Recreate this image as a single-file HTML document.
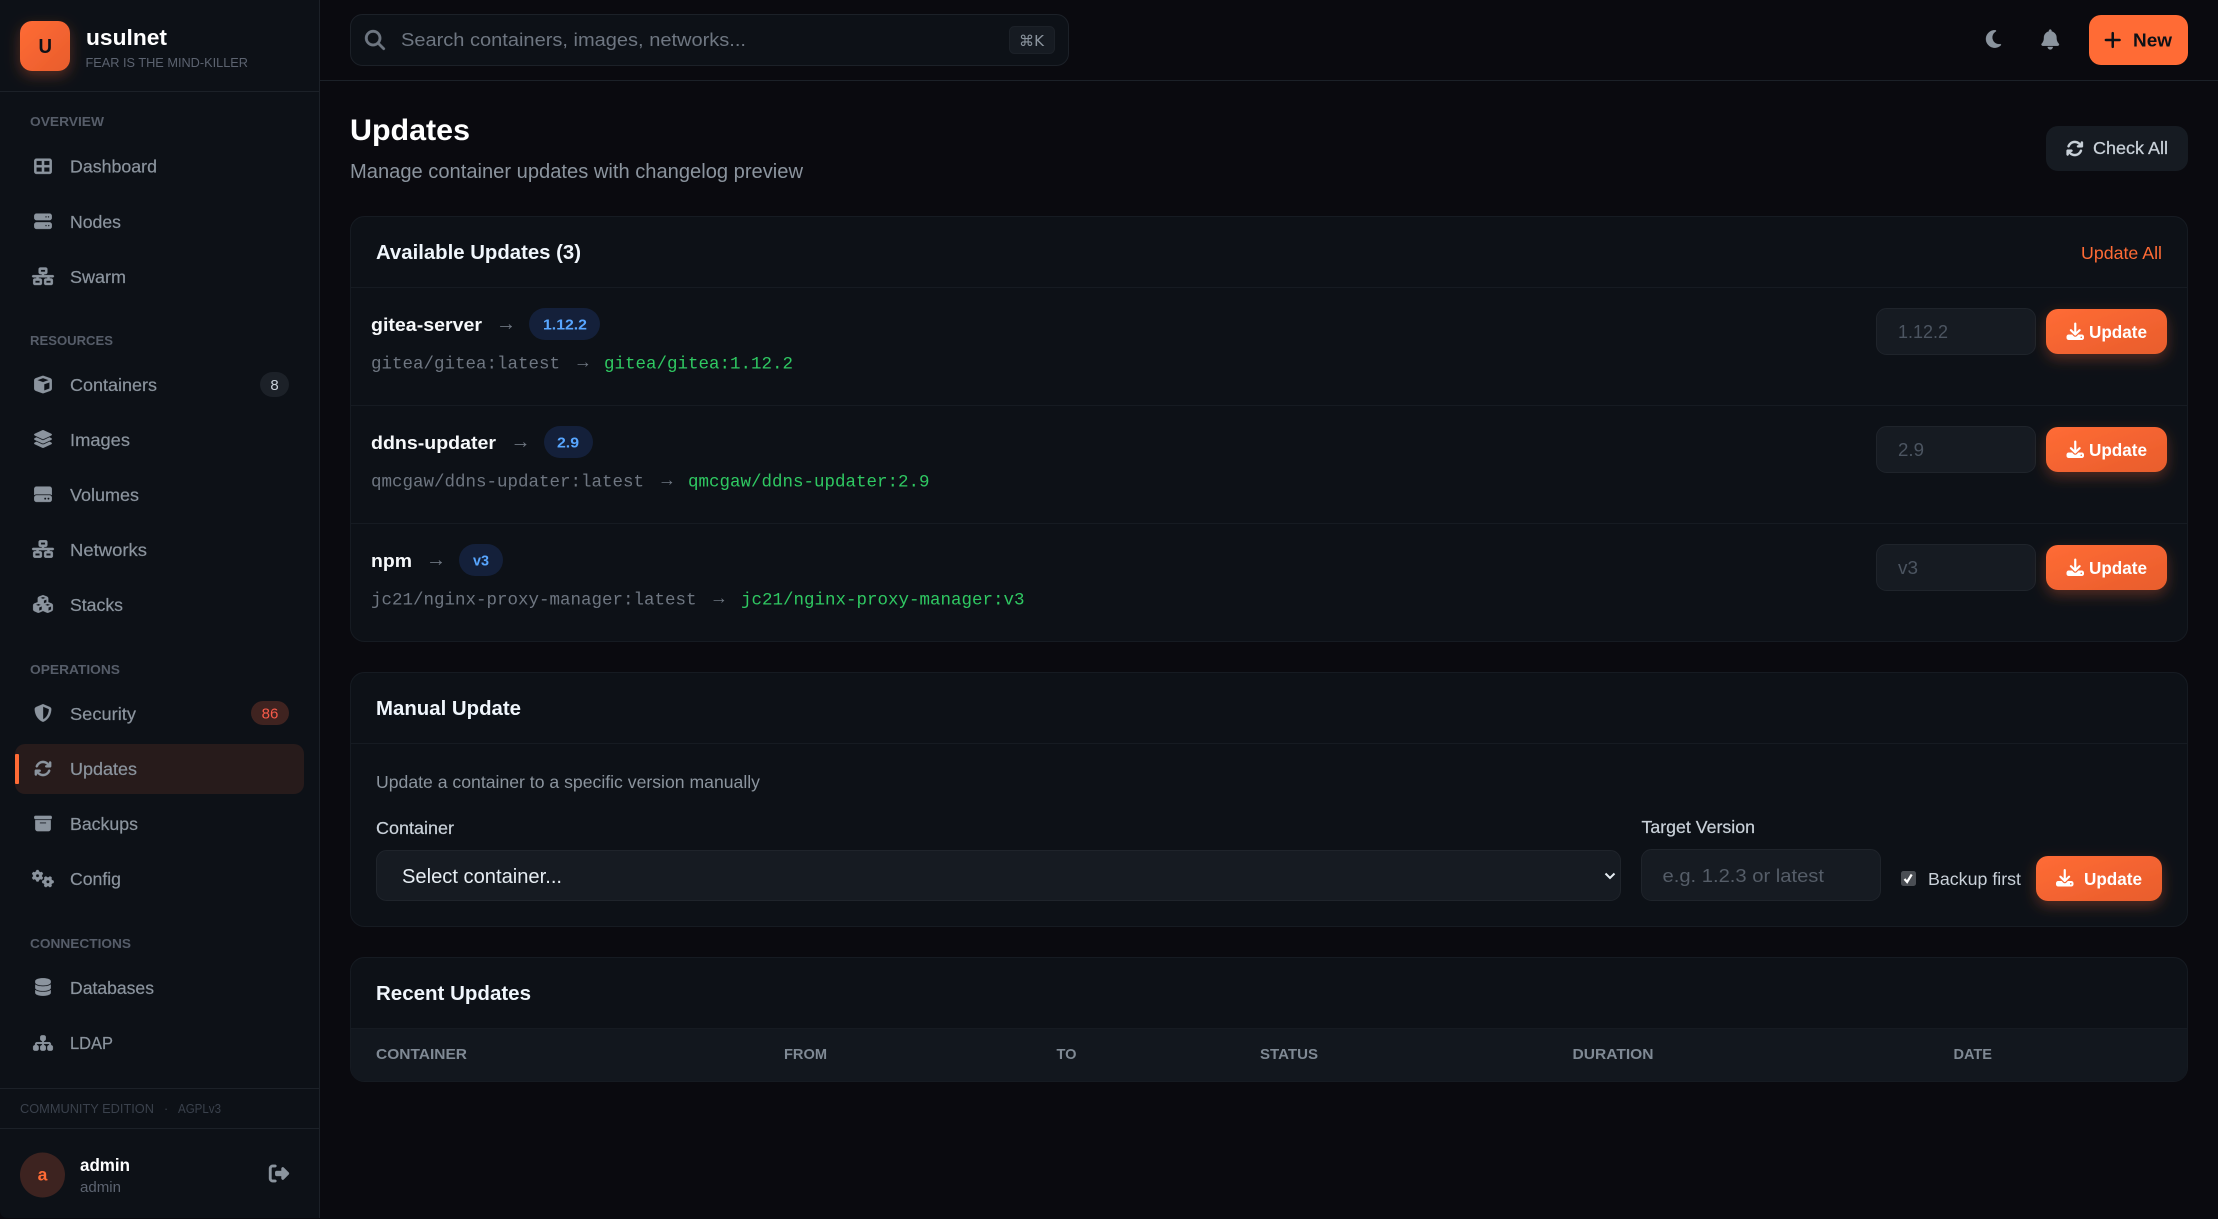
<!DOCTYPE html>
<html lang="en">
<head>
<meta charset="utf-8">
<title>usulnet - Updates</title>
<style>
html,body{margin:0;padding:0;width:2218px;height:1219px;overflow:hidden;background:#0a0a0f}
svg{display:block}
text{font-family:"Liberation Sans",sans-serif;white-space:pre}
.nav{font-size:17.5px;fill:#8b949e;stroke:#8b949e;stroke-width:.2px}
.lab{font-size:12.5px;font-weight:700;fill:#565d69}
.ct{font-size:20px;font-weight:700;fill:#f0f6fc}
.nm{font-size:18.75px;font-weight:700;fill:#f6f8fa}
.mono{font-family:"Liberation Mono",monospace;font-size:17.5px;fill:#6e7681}
.gr{font-family:"Liberation Mono",monospace;font-size:17.5px;fill:#2fc862}
.arr{font-size:20px;fill:#6e7681}
.arm{font-size:18px;fill:#6e7681}
.bdg{font-size:15px;font-weight:700;fill:#58a6ff}
.ph{font-size:18.75px;fill:#4c5561}
.btn{font-size:17.5px;font-weight:700;fill:#fff}
.th{font-size:15px;font-weight:700;fill:#7f8994}
.sb{fill:#8b949e;stroke:#8b949e;stroke-width:10}
</style>
</head>
<body>
<svg xmlns="http://www.w3.org/2000/svg" width="2218" height="1219" viewBox="0 0 2218 1219">
<defs>
<linearGradient id="og" x1="0" y1="0" x2="1" y2="1"><stop offset="0" stop-color="#ff6b35"/><stop offset="1" stop-color="#e85d2c"/></linearGradient>
<filter id="gl" x="-50%" y="-50%" width="200%" height="220%"><feDropShadow dx="0" dy="5" stdDeviation="7" flood-color="#ff6b35" flood-opacity=".3"/></filter>
<path id="i-grid" d="M448 96V224H288V96H448zm0 192V416H288V288H448zM224 224H64V96H224V224zM64 288H224V416H64V288zM64 32C28.7 32 0 60.7 0 96V416c0 35.3 28.7 64 64 64H448c35.3 0 64-28.7 64-64V96c0-35.3-28.7-64-64-64H64z"/>
<path id="i-server" d="M64 32C28.7 32 0 60.7 0 96v64c0 35.3 28.7 64 64 64H448c35.3 0 64-28.7 64-64V96c0-35.3-28.7-64-64-64H64zm280 72a24 24 0 1 1 0 48 24 24 0 1 1 0-48zm48 24a24 24 0 1 1 48 0 24 24 0 1 1 -48 0zM64 288c-35.3 0-64 28.7-64 64v64c0 35.3 28.7 64 64 64H448c35.3 0 64-28.7 64-64V352c0-35.3-28.7-64-64-64H64zm280 72a24 24 0 1 1 0 48 24 24 0 1 1 0-48zm56 24a24 24 0 1 1 48 0 24 24 0 1 1 -48 0z"/>
<path id="i-net" d="M256 64H384v64H256V64zM240 0c-26.5 0-48 21.5-48 48v96c0 26.5 21.5 48 48 48h48v32H32c-17.7 0-32 14.3-32 32s14.3 32 32 32h96v32H80c-26.5 0-48 21.5-48 48v96c0 26.5 21.5 48 48 48H240c26.5 0 48-21.5 48-48V368c0-26.5-21.5-48-48-48H192V288H448v32H400c-26.5 0-48 21.5-48 48v96c0 26.5 21.5 48 48 48H560c26.5 0 48-21.5 48-48V368c0-26.5-21.5-48-48-48H512V288h96c17.7 0 32-14.3 32-32s-14.3-32-32-32H352V192h48c26.5 0 48-21.5 48-48V48c0-26.5-21.5-48-48-48H240zM96 448V384H224v64H96zm320-64H544v64H416V384z"/>
<path id="i-cube" d="M234.5 5.7c13.9-5 29.1-5 43.1 0l192 68.6C495 83.4 512 107.5 512 134.6V377.4c0 27-17 51.2-42.5 60.3l-192 68.6c-13.9 5-29.1 5-43.1 0l-192-68.6C17 428.6 0 404.5 0 377.4V134.6c0-27 17-51.2 42.5-60.3l192-68.6zM256 66L82.3 128 256 190l173.7-62L256 66zm32 368.6l160-57.1v-188L288 246.6v188z"/>
<path id="i-layer" d="M264.5 5.2c14.9-6.9 32.1-6.9 47 0l218.6 101c8.5 3.9 13.9 12.4 13.9 21.8s-5.4 17.9-13.9 21.8l-218.6 101c-14.9 6.9-32.1 6.9-47 0L45.9 149.8C37.4 145.8 32 137.3 32 128s5.4-17.9 13.9-21.8L264.5 5.2zM476.9 209.6l53.2 24.6c8.5 3.9 13.9 12.4 13.9 21.8s-5.4 17.9-13.9 21.8l-218.6 101c-14.9 6.9-32.1 6.9-47 0L45.9 277.8C37.4 273.8 32 265.3 32 256s5.4-17.9 13.9-21.8l53.2-24.6 152 70.2c23.4 10.8 50.4 10.8 73.8 0l152-70.2zm-152 198.2l152-70.2 53.2 24.6c8.5 3.9 13.9 12.4 13.9 21.8s-5.4 17.9-13.9 21.8l-218.6 101c-14.9 6.9-32.1 6.9-47 0L45.9 405.8C37.4 401.8 32 393.3 32 384s5.4-17.9 13.9-21.8l53.2-24.6 152 70.2c23.4 10.8 50.4 10.8 73.8 0z"/>
<path id="i-hdd" d="M0 96C0 60.7 28.7 32 64 32H448c35.3 0 64 28.7 64 64V280.4c-17-15.2-39.4-24.4-64-24.4H64c-24.6 0-47 9.2-64 24.4V96zM64 288H448c35.3 0 64 28.7 64 64v64c0 35.3-28.7 64-64 64H64c-35.3 0-64-28.7-64-64V352c0-35.3 28.7-64 64-64zM320 416a32 32 0 1 0 0-64 32 32 0 1 0 0 64zm128-32a32 32 0 1 0 -64 0 32 32 0 1 0 64 0z"/>
<path id="i-cubes" d="M290.8 48.6l78.4 29.7L288 109.5 206.8 78.3l78.4-29.7c1.8-.7 3.8-.7 5.7 0zM136 92.5V204.7c-1.3 .4-2.6 .8-3.9 1.3l-96 36.4C14.4 250.6 0 271.5 0 294.7V413.9c0 22.2 13.1 42.3 33.5 51.3l96 42.2c14.4 6.3 30.7 6.3 45.1 0L288 457.5l113.5 49.9c14.4 6.3 30.7 6.3 45.1 0l96-42.2c20.3-8.9 33.5-29.1 33.5-51.3V294.7c0-23.3-14.4-44.1-36.1-52.4l-96-36.4c-1.3-.5-2.6-.9-3.9-1.3V92.5c0-23.3-14.4-44.1-36.1-52.4l-96-36.4c-12.8-4.8-26.9-4.8-39.7 0l-96 36.4C150.4 48.4 136 69.3 136 92.5zM392 210.6l-82.4 31.2V152.6L392 121v89.6zM154.8 250.9l78.4 29.7L152 311.7 70.8 280.6l78.4-29.7c1.8-.7 3.8-.7 5.7 0zm18.8 204.4V354.8L256 323.2v95.9l-82.4 36.2zM421.2 250.9c1.8-.7 3.8-.7 5.7 0l78.4 29.7L424 311.7l-81.2-31.1 78.4-29.7zM523.2 421.2l-77.6 34.1V354.8L528 323.2v90.7c0 3.2-1.9 6-4.8 7.3z"/>
<path id="i-shield" d="M256 0c4.6 0 9.2 1 13.4 2.9L457.7 82.8c22 9.3 38.4 31 38.3 57.2c-.5 99.2-41.3 280.7-213.6 363.2c-16.7 8-36.1 8-52.8 0C57.3 420.7 16.5 239.2 16 140c-.1-26.2 16.3-47.9 38.3-57.2L242.7 2.9C246.8 1 251.4 0 256 0zm0 66.8V444.8C394 378 431.1 230.1 432 141.4L256 66.8l0 0z"/>
<path id="i-sync" d="M105.1 202.6c7.7-21.8 20.2-42.3 37.8-59.8c62.5-62.5 163.8-62.5 226.3 0L386.3 160H352c-17.7 0-32 14.3-32 32s14.3 32 32 32H463.5c0 0 0 0 0 0h.4c17.7 0 32-14.3 32-32V80c0-17.7-14.3-32-32-32s-32 14.3-32 32v35.2L414.4 97.6c-87.5-87.5-229.3-87.5-316.8 0C73.2 122 55.6 150.7 44.8 181.4c-5.9 16.7 2.9 34.9 19.5 40.8s34.9-2.9 40.8-19.5zM39 289.3c-5 1.5-9.8 4.2-13.7 8.2c-4 4-6.7 8.8-8.1 14c-.3 1.2-.6 2.5-.8 3.8c-.3 1.7-.4 3.4-.4 5.1V432c0 17.7 14.3 32 32 32s32-14.3 32-32V396.9l17.6 17.5 0 0c87.5 87.4 229.3 87.4 316.7 0c24.4-24.4 42.1-53.1 52.9-83.7c5.9-16.7-2.9-34.9-19.5-40.8s-34.9 2.9-40.8 19.5c-7.7 21.8-20.2 42.3-37.8 59.8c-62.5 62.5-163.8 62.5-226.3 0l-.1-.1L125.6 352H160c17.7 0 32-14.3 32-32s-14.3-32-32-32H48.4c-1.6 0-3.2 .1-4.8 .3s-3.1 .5-4.6 1z"/>
<path id="i-box" d="M32 32H480c17.7 0 32 14.3 32 32V96c0 17.7-14.3 32-32 32H32C14.3 128 0 113.7 0 96V64C0 46.3 14.3 32 32 32zm0 128H480V416c0 35.3-28.7 64-64 64H96c-35.3 0-64-28.7-64-64V160zm128 80c0 8.8 7.2 16 16 16H336c8.8 0 16-7.2 16-16s-7.2-16-16-16H176c-8.8 0-16 7.2-16 16z"/>
<path id="i-gears" d="M308.5 135.3c7.1-6.3 9.9-16.2 6.2-25c-2.3-5.3-4.8-10.5-7.6-15.5L304 89.4c-3-5-6.3-9.9-9.8-14.6c-5.7-7.6-15.7-10.1-24.7-7.1l-28.2 9.3c-10.7-8.8-23-16-36.2-20.9L198 27.1c-1.9-9.3-9.1-16.7-18.5-17.8C173.9 8.4 167.2 8 160.4 8h-.7c-6.8 0-13.5 .4-20.1 1.2c-9.4 1.1-16.6 8.6-18.5 17.8L115 56.1c-13.3 5-25.5 12.1-36.2 20.9L50.5 67.8c-9-3-19-.5-24.7 7.1c-3.5 4.7-6.8 9.6-9.9 14.6l-3 5.3c-2.8 5-5.3 10.2-7.6 15.6c-3.7 8.7-.9 18.6 6.2 25l22.2 19.8C32.6 161.9 32 168.9 32 176s.6 14.1 1.7 20.9L11.5 216.7c-7.1 6.3-9.9 16.2-6.2 25c2.3 5.3 4.8 10.5 7.6 15.6l3 5.2c3 5.1 6.3 9.9 9.9 14.6c5.7 7.6 15.7 10.1 24.7 7.1l28.2-9.3c10.7 8.8 23 16 36.2 20.9l6.1 29.1c1.9 9.3 9.1 16.7 18.5 17.8c6.7 .8 13.5 1.2 20.4 1.2s13.7-.4 20.4-1.2c9.4-1.1 16.6-8.6 18.5-17.8l6.1-29.1c13.3-5 25.5-12.1 36.2-20.9l28.2 9.3c9 3 19 .5 24.7-7.1c3.5-4.7 6.8-9.5 9.8-14.6l3.1-5.4c2.8-5 5.3-10.2 7.6-15.5c3.7-8.7 .9-18.6-6.2-25l-22.2-19.8c1.1-6.8 1.7-13.8 1.7-20.9s-.6-14.1-1.7-20.9l22.2-19.8zM112 176a48 48 0 1 1 96 0 48 48 0 1 1 -96 0zM504.7 500.5c6.3 7.1 16.2 9.9 25 6.2c5.3-2.3 10.5-4.8 15.5-7.6l5.4-3.1c5-3 9.9-6.3 14.6-9.8c7.6-5.7 10.1-15.7 7.1-24.7l-9.3-28.2c8.8-10.7 16-23 20.9-36.2l29.1-6.1c9.3-1.9 16.7-9.1 17.8-18.5c.8-6.7 1.2-13.5 1.2-20.4s-.4-13.7-1.2-20.4c-1.1-9.4-8.6-16.6-17.8-18.5L583.9 307c-5-13.3-12.1-25.5-20.9-36.2l9.3-28.2c3-9 .5-19-7.1-24.7c-4.7-3.5-9.6-6.8-14.6-9.9l-5.3-3c-5-2.8-10.2-5.3-15.6-7.6c-8.7-3.7-18.6-.9-25 6.2l-19.8 22.2c-6.8-1.1-13.8-1.7-20.9-1.7s-14.1 .6-20.9 1.7l-19.8-22.2c-6.3-7.1-16.2-9.9-25-6.2c-5.3 2.3-10.5 4.8-15.6 7.6l-5.2 3c-5.1 3-9.9 6.3-14.6 9.9c-7.6 5.7-10.1 15.7-7.1 24.7l9.3 28.2c-8.8 10.7-16 23-20.9 36.2L315.1 313c-9.3 1.9-16.7 9.1-17.8 18.5c-.8 6.7-1.2 13.5-1.2 20.4s.4 13.7 1.2 20.4c1.1 9.4 8.6 16.6 17.8 18.5l29.1 6.1c5 13.3 12.1 25.5 20.9 36.2l-9.3 28.2c-3 9-.5 19 7.1 24.7c4.7 3.5 9.5 6.8 14.6 9.8l5.4 3.1c5 2.8 10.2 5.3 15.5 7.6c8.7 3.7 18.6 .9 25-6.2l19.8-22.2c6.8 1.1 13.8 1.7 20.9 1.7s14.1-.6 20.9-1.7l19.8 22.2zM464 304a48 48 0 1 1 0 96 48 48 0 1 1 0-96z"/>
<path id="i-db" d="M448 80v48c0 44.2-100.3 80-224 80S0 172.2 0 128V80C0 35.8 100.3 0 224 0S448 35.8 448 80zM393.2 214.7c20.8-7.4 39.9-16.9 54.8-28.6V288c0 44.2-100.3 80-224 80S0 332.2 0 288V186.1c14.9 11.8 34 21.2 54.8 28.6C99.7 230.7 159.5 240 224 240s124.3-9.3 169.2-25.3zM0 346.1c14.9 11.8 34 21.2 54.8 28.6C99.7 390.7 159.5 400 224 400s124.3-9.3 169.2-25.3c20.8-7.4 39.9-16.9 54.8-28.6V432c0 44.2-100.3 80-224 80S0 476.2 0 432V346.1z"/>
<path id="i-map" d="M208 80c0-26.5 21.5-48 48-48h64c26.5 0 48 21.5 48 48v64c0 26.5-21.5 48-48 48h-8v40H464c30.9 0 56 25.1 56 56v32h8c26.5 0 48 21.5 48 48v64c0 26.5-21.5 48-48 48H464c-26.5 0-48-21.5-48-48V368c0-26.5 21.5-48 48-48h8V288c0-4.4-3.6-8-8-8H312v40h8c26.5 0 48 21.5 48 48v64c0 26.5-21.5 48-48 48H256c-26.5 0-48-21.5-48-48V368c0-26.5 21.5-48 48-48h8V280H112c-4.4 0-8 3.6-8 8v32h8c26.5 0 48 21.5 48 48v64c0 26.5-21.5 48-48 48H48c-26.5 0-48-21.5-48-48V368c0-26.5 21.5-48 48-48h8V288c0-30.9 25.1-56 56-56H264V192h-8c-26.5 0-48-21.5-48-48V80z"/>
<path id="i-out" d="M377.9 105.9L500.7 228.7c7.2 7.2 11.3 17.1 11.3 27.3s-4.1 20.1-11.3 27.3L377.9 406.1c-6.4 6.4-15 9.9-24 9.9c-18.7 0-33.9-15.2-33.9-33.9l0-62.1-128 0c-17.7 0-32-14.3-32-32l0-64c0-17.7 14.3-32 32-32l128 0 0-62.1c0-18.7 15.2-33.9 33.9-33.9c9 0 17.6 3.6 24 9.9zM160 96L96 96c-17.7 0-32 14.3-32 32l0 256c0 17.7 14.3 32 32 32l64 0c17.7 0 32 14.3 32 32s-14.3 32-32 32l-64 0c-53 0-96-43-96-96L0 128C0 75 43 32 96 32l64 0c17.7 0 32 14.3 32 32s-14.3 32-32 32z"/>
<path id="i-search" d="M416 208c0 45.9-14.9 88.3-40 122.7L502.6 457.4c12.5 12.5 12.5 32.8 0 45.3s-32.8 12.5-45.3 0L330.7 376c-34.4 25.2-76.8 40-122.7 40C93.1 416 0 322.9 0 208S93.1 0 208 0S416 93.1 416 208zM208 352a144 144 0 1 0 0-288 144 144 0 1 0 0 288z"/>
<path id="i-plus" d="M256 80c0-17.7-14.3-32-32-32s-32 14.3-32 32V224H48c-17.7 0-32 14.3-32 32s14.3 32 32 32H192V432c0 17.7 14.3 32 32 32s32-14.3 32-32V288H400c17.7 0 32-14.3 32-32s-14.3-32-32-32H256V80z"/>
<path id="i-moon" d="M223.5 32C100 32 0 132.3 0 256S100 480 223.5 480c60.6 0 115.5-24.2 155.8-63.4c5-4.9 6.3-12.5 3.1-18.7s-10.1-9.7-17-8.5c-9.8 1.7-19.8 2.6-30.1 2.6c-96.9 0-175.5-78.8-175.5-176c0-65.8 36-123.1 89.3-153.3c6.1-3.5 9.2-10.5 7.7-17.3s-7.3-11.9-14.3-12.5c-6.3-.5-12.6-.8-19-.8z"/>
<path id="i-bell" d="M224 0c-17.7 0-32 14.3-32 32V51.2C119 66 64 130.6 64 208v18.8c0 47-17.3 92.4-48.5 127.6l-7.4 8.3c-8.4 9.4-10.4 22.9-5.3 34.4S19.4 416 32 416H416c12.6 0 24-7.4 29.2-18.9s3.1-25-5.3-34.4l-7.4-8.3C401.3 319.2 384 273.9 384 226.8V208c0-77.4-55-142-128-156.8V32c0-17.7-14.3-32-32-32zm45.3 493.3c12-12 18.7-28.3 18.7-45.3H224 160c0 17 6.7 33.3 18.7 45.3s28.3 18.7 45.3 18.7s33.3-6.7 45.3-18.7z"/>
<path id="i-dl" d="M288 32c0-17.7-14.3-32-32-32s-32 14.3-32 32V274.7l-73.4-73.4c-12.5-12.5-32.8-12.5-45.3 0s-12.5 32.8 0 45.3l128 128c12.5 12.5 32.8 12.5 45.3 0l128-128c12.5-12.5 12.5-32.8 0-45.3s-32.8-12.5-45.3 0L288 274.7V32zM64 352c-35.3 0-64 28.7-64 64v32c0 35.3 28.7 64 64 64H448c35.3 0 64-28.7 64-64V416c0-35.3-28.7-64-64-64H346.5l-45.3 45.3c-25 25-65.5 25-90.5 0L165.5 352H64zm368 56a24 24 0 1 1 0 48 24 24 0 1 1 0-48z"/>
</defs>

<rect width="2218" height="1219" fill="#0a0a0f"/>

<!-- Sidebar -->
<path d="M0 0H320V1218H8Q0 1218 0 1210Z" fill="#0d1117"/>
<rect x="319" y="0" width="1" height="1218" fill="#1c2128"/>
<rect x="0" y="91" width="319" height="1" fill="#1c2128"/>
<rect x="20" y="21" width="50" height="50" rx="12" fill="url(#og)" filter="url(#gl)"/>
<text x="38.5" y="53" font-size="20" font-weight="700" fill="#0d1117" textLength="13.5" lengthAdjust="spacingAndGlyphs">U</text>
<text x="86" y="45" font-size="22.5" font-weight="700" fill="#fff" textLength="81" lengthAdjust="spacingAndGlyphs">usulnet</text>
<text x="85.5" y="67" font-size="12.5" fill="#5c6370" textLength="162.5" lengthAdjust="spacingAndGlyphs">FEAR IS THE MIND-KILLER</text>

<text class="lab" x="30" y="126" textLength="74" lengthAdjust="spacingAndGlyphs">OVERVIEW</text>
<rect x="15" y="744" width="289" height="50" rx="10" fill="#271b1b"/>
<rect x="15" y="754" width="4" height="30" rx="1" fill="#ff6b35"/>
<g class="sb">
<use href="#i-grid" transform="translate(34.25 157.5) scale(.0342)"/>
<use href="#i-server" transform="translate(34.25 212.5) scale(.0342)"/>
<use href="#i-net" transform="translate(32.06 267.5) scale(.0342)"/>
<use href="#i-cube" transform="translate(34.25 375.75) scale(.0342)"/>
<use href="#i-layer" transform="translate(33.15 430.25) scale(.0342)"/>
<use href="#i-hdd" transform="translate(34.25 485.5) scale(.0342)"/>
<use href="#i-net" transform="translate(32.06 540.25) scale(.0342)"/>
<use href="#i-cubes" transform="translate(33.15 595.25) scale(.0342)"/>
<use href="#i-shield" transform="translate(34.25 704.25) scale(.0342)"/>
<use href="#i-sync" transform="translate(34.25 759.75) scale(.0342)"/>
<use href="#i-box" transform="translate(34.25 814.75) scale(.0342)"/>
<use href="#i-gears" transform="translate(32.06 869.75) scale(.0342)"/>
<use href="#i-db" transform="translate(35.34 978.25) scale(.0342)"/>
<use href="#i-map" transform="translate(33.15 1034.25) scale(.0342)"/>
<use href="#i-out" transform="translate(269 1163.5) scale(.039)"/>
</g>
<text class="nav" x="70" y="172.5" textLength="87" lengthAdjust="spacingAndGlyphs">Dashboard</text>
<text class="nav" x="70" y="228" textLength="51" lengthAdjust="spacingAndGlyphs">Nodes</text>
<text class="nav" x="70" y="283" textLength="56" lengthAdjust="spacingAndGlyphs">Swarm</text>
<text class="lab" x="30" y="345" textLength="83" lengthAdjust="spacingAndGlyphs">RESOURCES</text>
<text class="nav" x="70" y="391" textLength="87" lengthAdjust="spacingAndGlyphs">Containers</text>
<rect x="260" y="372" width="29" height="25" rx="12.5" fill="#1c2128"/>
<text x="274.5" y="390" font-size="15" fill="#c9d1d9" text-anchor="middle">8</text>
<text class="nav" x="70" y="446" textLength="60" lengthAdjust="spacingAndGlyphs">Images</text>
<text class="nav" x="70" y="501" textLength="69" lengthAdjust="spacingAndGlyphs">Volumes</text>
<text class="nav" x="70" y="556" textLength="77" lengthAdjust="spacingAndGlyphs">Networks</text>
<text class="nav" x="70" y="611" textLength="53" lengthAdjust="spacingAndGlyphs">Stacks</text>
<text class="lab" x="30" y="674" textLength="90" lengthAdjust="spacingAndGlyphs">OPERATIONS</text>
<text class="nav" x="70" y="720" textLength="66" lengthAdjust="spacingAndGlyphs">Security</text>
<rect x="251" y="701" width="38" height="24" rx="12" fill="#3f2320"/>
<text x="270" y="718.5" font-size="15" fill="#f85a4a" text-anchor="middle">86</text>
<text class="nav" x="70" y="775" textLength="67" lengthAdjust="spacingAndGlyphs">Updates</text>
<text class="nav" x="70" y="830" textLength="68" lengthAdjust="spacingAndGlyphs">Backups</text>
<text class="nav" x="70" y="885" textLength="51" lengthAdjust="spacingAndGlyphs">Config</text>
<text class="lab" x="30" y="948" textLength="101" lengthAdjust="spacingAndGlyphs">CONNECTIONS</text>
<text class="nav" x="70" y="994" textLength="84" lengthAdjust="spacingAndGlyphs">Databases</text>
<text class="nav" x="70" y="1049" textLength="43" lengthAdjust="spacingAndGlyphs">LDAP</text>
<rect x="0" y="1088" width="319" height="1" fill="#1c2128"/>
<text x="20" y="1113" font-size="12.5" fill="#3a414c" textLength="134" lengthAdjust="spacingAndGlyphs">COMMUNITY EDITION</text>
<text x="164" y="1113" font-size="12.5" fill="#3a414c">·</text>
<text x="178" y="1113" font-size="12.5" fill="#3a414c" textLength="43" lengthAdjust="spacingAndGlyphs">AGPLv3</text>
<rect x="0" y="1128" width="319" height="1" fill="#1c2128"/>
<circle cx="42.5" cy="1175" r="22.5" fill="#3d2320"/>
<text x="42.5" y="1180.5" font-size="17.5" font-weight="700" fill="#ff6b35" text-anchor="middle">a</text>
<text x="80" y="1171" font-size="17.5" font-weight="700" fill="#fff" textLength="50" lengthAdjust="spacingAndGlyphs">admin</text>
<text x="80" y="1192" font-size="15" fill="#5c6370" textLength="41" lengthAdjust="spacingAndGlyphs">admin</text>

<!-- Top bar -->
<rect x="320" y="80" width="1898" height="1" fill="#1c2128"/>
<rect x="350.5" y="14.5" width="718" height="51" rx="12" fill="#0d1117" stroke="#1c2128"/>
<use href="#i-search" fill="#6e7681" stroke="#6e7681" stroke-width="10" transform="translate(365 30) scale(.039)"/>
<text x="401" y="46" font-size="18.75" fill="#6e7681" textLength="345" lengthAdjust="spacingAndGlyphs">Search containers, images, networks...</text>
<rect x="1009.5" y="26.5" width="45" height="27" rx="5" fill="#161b22" stroke="#1c2128"/>
<text x="1019" y="46" font-size="15" fill="#8b949e" style="font-family:'DejaVu Sans','Liberation Sans',sans-serif" textLength="25" lengthAdjust="spacingAndGlyphs">⌘K</text>
<use href="#i-moon" fill="#8b949e" stroke="#8b949e" stroke-width="10" transform="translate(1986 29) scale(.039)"/>
<use href="#i-bell" fill="#8b949e" stroke="#8b949e" stroke-width="10" transform="translate(2041.5 29.5) scale(.039)"/>
<rect x="2089" y="15" width="99" height="50" rx="12" fill="#ff6b35"/>
<use href="#i-plus" fill="#0d1117" transform="translate(2104 30) scale(.039)"/>
<text x="2133" y="46.5" font-size="18.75" font-weight="700" fill="#0d1117" textLength="39" lengthAdjust="spacingAndGlyphs">New</text>

<!-- Page header -->
<text x="350" y="140" font-size="30" font-weight="700" fill="#fff" textLength="120" lengthAdjust="spacingAndGlyphs">Updates</text>
<text x="350" y="178" font-size="20" fill="#8b949e" textLength="453" lengthAdjust="spacingAndGlyphs">Manage container updates with changelog preview</text>
<rect x="2046" y="126" width="142" height="45" rx="12" fill="#161b22"/>
<use href="#i-sync" fill="#c9d1d9" stroke="#c9d1d9" stroke-width="10" transform="translate(2066 139.75) scale(.0342)"/>
<text x="2093" y="154" font-size="17.5" fill="#c9d1d9" stroke="#c9d1d9" stroke-width=".25" textLength="75" lengthAdjust="spacingAndGlyphs">Check All</text>

<!-- Available updates -->
<rect x="350.5" y="216.5" width="1837" height="425" rx="14" fill="#0d1117" stroke="#161b22"/>
<text class="ct" x="376" y="259" textLength="205" lengthAdjust="spacingAndGlyphs">Available Updates (3)</text>
<text x="2081" y="259" font-size="17.5" fill="#ff6b35" textLength="81" lengthAdjust="spacingAndGlyphs">Update All</text>
<rect x="351" y="287" width="1836" height="1" fill="#161b22"/>
<rect x="351" y="405" width="1836" height="1" fill="#161b22"/>
<rect x="351" y="523" width="1836" height="1" fill="#161b22"/>

<text class="nm" x="371" y="331" textLength="111" lengthAdjust="spacingAndGlyphs">gitea-server</text>
<text class="arr" x="496" y="330" textLength="20" lengthAdjust="spacingAndGlyphs">→</text>
<rect x="529" y="308" width="71" height="32" rx="16" fill="#14203a"/>
<text class="bdg" x="543" y="329.5" textLength="44" lengthAdjust="spacingAndGlyphs">1.12.2</text>
<text class="mono" x="371" y="368.5">gitea/gitea:latest</text>
<text class="arm" x="574" y="367.5" textLength="18" lengthAdjust="spacingAndGlyphs">→</text>
<text class="gr" x="604" y="368.5">gitea/gitea:1.12.2</text>
<rect x="1876.5" y="308.5" width="159" height="46" rx="10" fill="#161b22" stroke="#1f242b"/>
<text class="ph" x="1898" y="338" textLength="50" lengthAdjust="spacingAndGlyphs">1.12.2</text>
<rect x="2046" y="309" width="121" height="45" rx="12" fill="url(#og)" filter="url(#gl)"/>
<use href="#i-dl" fill="#fff" transform="translate(2066.5 322.5) scale(.0342)"/>
<text class="btn" x="2089" y="338" textLength="58" lengthAdjust="spacingAndGlyphs">Update</text>

<text class="nm" x="371" y="449" textLength="125" lengthAdjust="spacingAndGlyphs">ddns-updater</text>
<text class="arr" x="510.5" y="448" textLength="20" lengthAdjust="spacingAndGlyphs">→</text>
<rect x="544" y="426" width="49" height="32" rx="16" fill="#14203a"/>
<text class="bdg" x="557" y="447.5" textLength="22" lengthAdjust="spacingAndGlyphs">2.9</text>
<text class="mono" x="371" y="486.5">qmcgaw/ddns-updater:latest</text>
<text class="arm" x="658" y="485.5" textLength="18" lengthAdjust="spacingAndGlyphs">→</text>
<text class="gr" x="688" y="486.5">qmcgaw/ddns-updater:2.9</text>
<rect x="1876.5" y="426.5" width="159" height="46" rx="10" fill="#161b22" stroke="#1f242b"/>
<text class="ph" x="1898" y="456" textLength="26" lengthAdjust="spacingAndGlyphs">2.9</text>
<rect x="2046" y="427" width="121" height="45" rx="12" fill="url(#og)" filter="url(#gl)"/>
<use href="#i-dl" fill="#fff" transform="translate(2066.5 440.5) scale(.0342)"/>
<text class="btn" x="2089" y="456" textLength="58" lengthAdjust="spacingAndGlyphs">Update</text>

<text class="nm" x="371" y="567" textLength="41" lengthAdjust="spacingAndGlyphs">npm</text>
<text class="arr" x="426" y="566" textLength="20" lengthAdjust="spacingAndGlyphs">→</text>
<rect x="459" y="544" width="44" height="32" rx="16" fill="#14203a"/>
<text class="bdg" x="473" y="565.5" textLength="16" lengthAdjust="spacingAndGlyphs">v3</text>
<text class="mono" x="371" y="604.5">jc21/nginx-proxy-manager:latest</text>
<text class="arm" x="710" y="603.5" textLength="18" lengthAdjust="spacingAndGlyphs">→</text>
<text class="gr" x="741" y="604.5">jc21/nginx-proxy-manager:v3</text>
<rect x="1876.5" y="544.5" width="159" height="46" rx="10" fill="#161b22" stroke="#1f242b"/>
<text class="ph" x="1898" y="574" textLength="20" lengthAdjust="spacingAndGlyphs">v3</text>
<rect x="2046" y="545" width="121" height="45" rx="12" fill="url(#og)" filter="url(#gl)"/>
<use href="#i-dl" fill="#fff" transform="translate(2066.5 558.5) scale(.0342)"/>
<text class="btn" x="2089" y="574" textLength="58" lengthAdjust="spacingAndGlyphs">Update</text>

<!-- Manual update -->
<rect x="350.5" y="672.5" width="1837" height="254" rx="14" fill="#0d1117" stroke="#161b22"/>
<text class="ct" x="376" y="715" textLength="145" lengthAdjust="spacingAndGlyphs">Manual Update</text>
<rect x="351" y="743" width="1836" height="1" fill="#161b22"/>
<text x="376" y="788" font-size="17.5" fill="#8b949e" textLength="384" lengthAdjust="spacingAndGlyphs">Update a container to a specific version manually</text>
<text x="376" y="834" font-size="17.5" fill="#c9d1d9" stroke="#c9d1d9" stroke-width=".2" textLength="78" lengthAdjust="spacingAndGlyphs">Container</text>
<rect x="376.5" y="850.5" width="1244" height="50" rx="10" fill="#161b22" stroke="#1f242b"/>
<text x="402" y="883" font-size="20" fill="#e6edf3" textLength="160" lengthAdjust="spacingAndGlyphs">Select container...</text>
<path d="M1605.5 873.5l4.5 4.5 4.5-4.5" fill="none" stroke="#e6edf3" stroke-width="2"/>
<text x="1641.5" y="833" font-size="17.5" fill="#c9d1d9" stroke="#c9d1d9" stroke-width=".2" textLength="113.5" lengthAdjust="spacingAndGlyphs">Target Version</text>
<rect x="1641.5" y="849.5" width="239" height="51" rx="10" fill="#161b22" stroke="#1f242b"/>
<text x="1662.5" y="882" font-size="18.75" fill="#555d68" textLength="161.5" lengthAdjust="spacingAndGlyphs">e.g. 1.2.3 or latest</text>
<rect x="1901" y="871" width="15" height="15" rx="2.5" fill="#4a4e54"/>
<path d="M1904.5 879l2.6 3 4.6-7.5" fill="none" stroke="#fff" stroke-width="2.2"/>
<text x="1928" y="885" font-size="17.5" fill="#c9d1d9" textLength="93" lengthAdjust="spacingAndGlyphs">Backup first</text>
<rect x="2036" y="856" width="126" height="45" rx="12" fill="url(#og)" filter="url(#gl)"/>
<use href="#i-dl" fill="#fff" transform="translate(2056 869) scale(.0342)"/>
<text class="btn" x="2084" y="885" textLength="58" lengthAdjust="spacingAndGlyphs">Update</text>

<!-- Recent updates -->
<rect x="350.5" y="957.5" width="1837" height="124" rx="14" fill="#0d1117" stroke="#161b22"/>
<text class="ct" x="376" y="1000" textLength="155" lengthAdjust="spacingAndGlyphs">Recent Updates</text>
<path d="M351 1029H2187V1067Q2187 1081 2173 1081H365Q351 1081 351 1067Z" fill="#12171e"/>
<rect x="351" y="1028" width="1836" height="1" fill="#161b22"/>
<text class="th" x="376" y="1059" textLength="91" lengthAdjust="spacingAndGlyphs">CONTAINER</text>
<text class="th" x="784" y="1059" textLength="43" lengthAdjust="spacingAndGlyphs">FROM</text>
<text class="th" x="1056.5" y="1059" textLength="20" lengthAdjust="spacingAndGlyphs">TO</text>
<text class="th" x="1260" y="1059" textLength="58" lengthAdjust="spacingAndGlyphs">STATUS</text>
<text class="th" x="1572.5" y="1059" textLength="81" lengthAdjust="spacingAndGlyphs">DURATION</text>
<text class="th" x="1953.5" y="1059" textLength="38.5" lengthAdjust="spacingAndGlyphs">DATE</text>
</svg>
</body>
</html>
